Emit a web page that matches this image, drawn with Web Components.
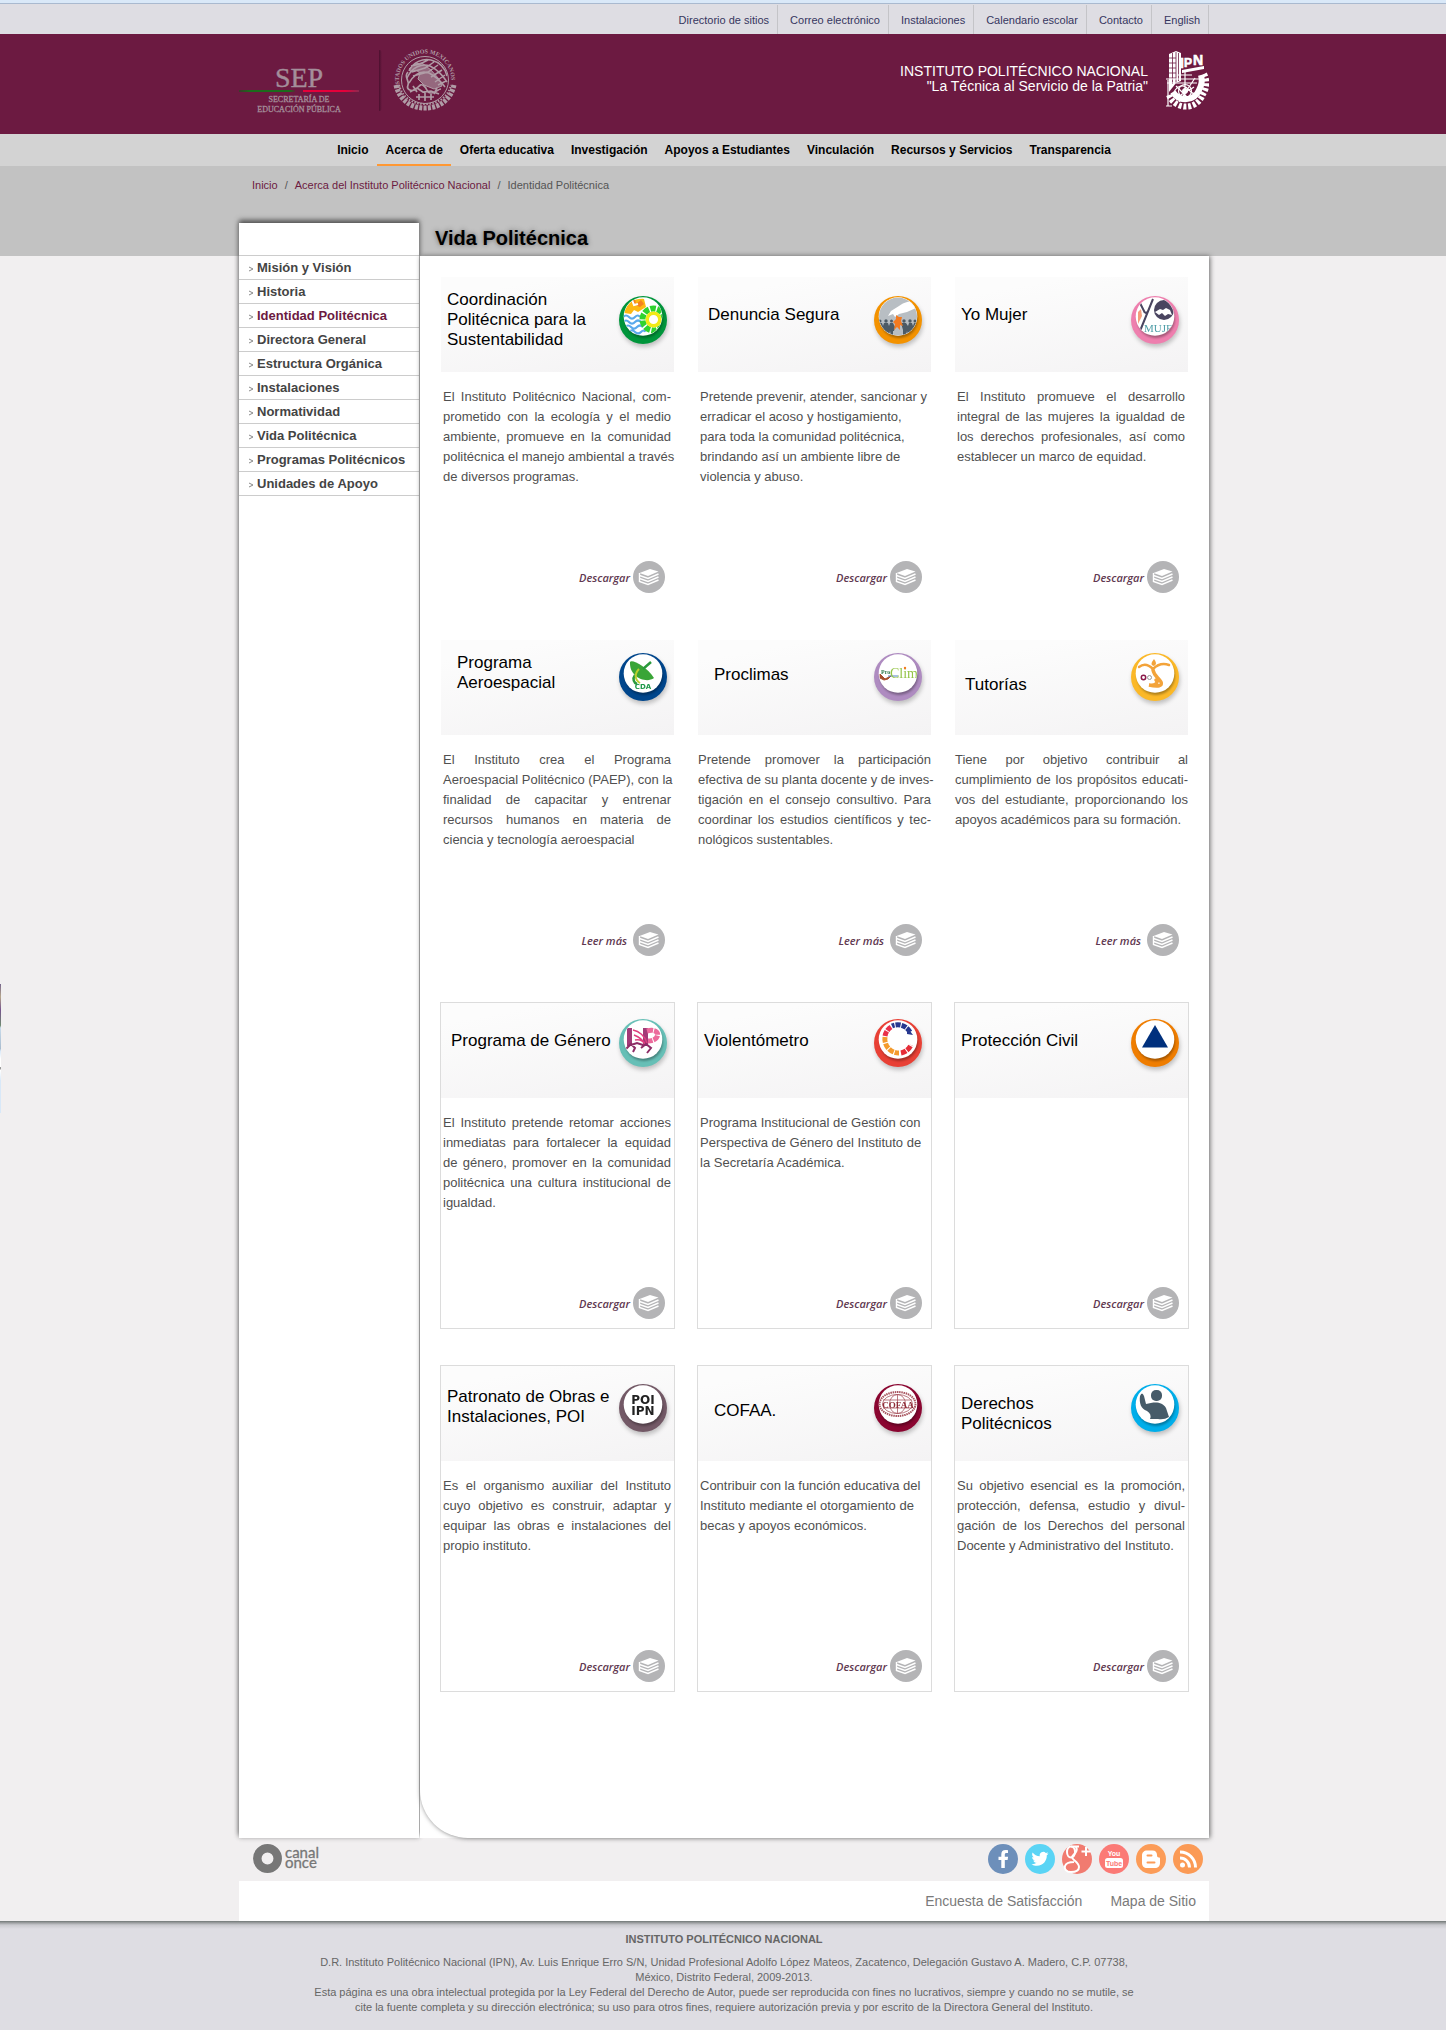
<!DOCTYPE html>
<html lang="es">
<head>
<meta charset="utf-8">
<title>Vida Politécnica - Instituto Politécnico Nacional</title>
<style>
  body { margin: 0; background: #f1eff0; font-family: "Liberation Sans", Arial, sans-serif; color: #444; }
</style>
</head>
<body>
<ipn-page>
  <top-bar slot="top">
    <a href="#">Directorio de sitios</a><a href="#">Correo electrónico</a><a href="#">Instalaciones</a><a href="#">Calendario escolar</a><a href="#">Contacto</a><a href="#">English</a>
  </top-bar>
  <site-header slot="top"></site-header>
  <main-nav slot="top">
    <a href="#">Inicio</a><a href="#" aria-current="page">Acerca de</a><a href="#">Oferta educativa</a><a href="#">Investigación</a><a href="#">Apoyos a Estudiantes</a><a href="#">Vinculación</a><a href="#">Recursos y Servicios</a><a href="#">Transparencia</a>
  </main-nav>
  <bread-crumb slot="crumbs"><a href="#">Inicio</a><span>/</span><a href="#">Acerca del Instituto Politécnico Nacional</a><span>/</span><span>Identidad Politécnica</span></bread-crumb>
  <side-menu slot="side">
    <a href="#">Misión y Visión</a>
    <a href="#">Historia</a>
    <a href="#" aria-current="page">Identidad Politécnica</a>
    <a href="#">Directora General</a>
    <a href="#">Estructura Orgánica</a>
    <a href="#">Instalaciones</a>
    <a href="#">Normatividad</a>
    <a href="#">Vida Politécnica</a>
    <a href="#">Programas Politécnicos</a>
    <a href="#">Unidades de Apoyo</a>
  </side-menu>
  <span slot="title">Vida Politécnica</span>

  <program-card class="r1 near" top="high" badge="sustentabilidad" color="#00953b" action="Descargar">
    <span slot="title">Coordinación<br>Politécnica para la<br>Sustentabilidad</span>
    <text-lines justify><span>El Instituto Politécnico Nacional, com-</span><span>prometido con la ecología y el medio</span><span>ambiente, promueve en la comunidad</span><span>politécnica el manejo ambiental a través</span><span>de diversos programas.</span></text-lines>
  </program-card>
  <program-card class="r1" indent="mid" badge="denuncia" color="#f39200" action="Descargar">
    <span slot="title">Denuncia Segura</span>
    <text-lines><span>Pretende prevenir, atender, sancionar y</span><span>erradicar el acoso y hostigamiento,</span><span>para toda la comunidad politécnica,</span><span>brindando así un ambiente libre de</span><span>violencia y abuso.</span></text-lines>
  </program-card>
  <program-card class="r1" badge="mujer" color="#ee7fae" action="Descargar">
    <span slot="title">Yo Mujer</span>
    <text-lines justify><span>El Instituto promueve el desarrollo</span><span>integral de las mujeres la igualdad de</span><span>los derechos profesionales, así como</span><span>establecer un marco de equidad.</span></text-lines>
  </program-card>

  <program-card class="r2 near" top="high" indent="far" badge="cda" color="#00468c" action="Leer más">
    <span slot="title">Programa<br>Aeroespacial</span>
    <text-lines justify><span>El Instituto crea el Programa</span><span>Aeroespacial Politécnico (PAEP), con la</span><span>finalidad de capacitar y entrenar</span><span>recursos humanos en materia de</span><span>ciencia y tecnología aeroespacial</span></text-lines>
  </program-card>
  <program-card class="r2" wide top="upper" indent="far" badge="clima" color="#ae8bc0" action="Leer más">
    <span slot="title">Proclimas</span>
    <text-lines justify><span>Pretende promover la participación</span><span>efectiva de su planta docente y de inves-</span><span>tigación en el consejo consultivo. Para</span><span>coordinar los estudios científicos y tec-</span><span>nológicos sustentables.</span></text-lines>
  </program-card>
  <program-card class="r2" wide top="low" indent="mid" badge="tutorias" color="#fbb827" action="Leer más">
    <span slot="title">Tutorías</span>
    <text-lines justify><span>Tiene por objetivo contribuir al</span><span>cumplimiento de los propósitos educati-</span><span>vos del estudiante, proporcionando los</span><span>apoyos académicos para su formación.</span></text-lines>
  </program-card>

  <program-card class="r3 near" framed indent="mid" badge="genero" color="#66bfb6" action="Descargar">
    <span slot="title">Programa de Género</span>
    <text-lines justify><span>El Instituto pretende retomar acciones</span><span>inmediatas para fortalecer la equidad</span><span>de género, promover en la comunidad</span><span>politécnica una cultura institucional de</span><span>igualdad.</span></text-lines>
  </program-card>
  <program-card class="r3" framed badge="violento" color="#e84035" action="Descargar">
    <span slot="title">Violentómetro</span>
    <text-lines><span>Programa Institucional de Gestión con</span><span>Perspectiva de Género del Instituto de</span><span>la Secretaría Académica.</span></text-lines>
  </program-card>
  <program-card class="r3" framed badge="civil" color="#ef7d00" action="Descargar">
    <span slot="title">Protección Civil</span>
  </program-card>

  <program-card class="r4 near" framed top="double" badge="poi" color="#735966" action="Descargar">
    <span slot="title">Patronato de Obras e<br>Instalaciones, POI</span>
    <text-lines justify><span>Es el organismo auxiliar del Instituto</span><span>cuyo objetivo es construir, adaptar y</span><span>equipar las obras e instalaciones del</span><span>propio instituto.</span></text-lines>
  </program-card>
  <program-card class="r4" framed top="low" indent="far" badge="cofaa" color="#8a0530" action="Descargar">
    <span slot="title">COFAA.</span>
    <text-lines><span>Contribuir con la función educativa del</span><span>Instituto mediante el otorgamiento de</span><span>becas y apoyos económicos.</span></text-lines>
  </program-card>
  <program-card class="r4" framed badge="derechos" color="#00aeea" action="Descargar">
    <span slot="title">Derechos<br>Politécnicos</span>
    <text-lines justify><span>Su objetivo esencial es la promoción,</span><span>protección, defensa, estudio y divul-</span><span>gación de los Derechos del personal</span><span>Docente y Administrativo del Instituto.</span></text-lines>
  </program-card>

  <social-strip slot="bottom"></social-strip>
  <quick-links slot="bottom"><a href="#">Encuesta de Satisfacción</a><a href="#">Mapa de Sitio</a></quick-links>
  <site-footer slot="bottom">
    <span slot="name">INSTITUTO POLITÉCNICO NACIONAL</span>
    D.R. Instituto Politécnico Nacional (IPN), Av. Luis Enrique Erro S/N, Unidad Profesional Adolfo López Mateos, Zacatenco, Delegación Gustavo A. Madero, C.P. 07738,<br>México, Distrito Federal, 2009-2013.<br>Esta página es una obra intelectual protegida por la Ley Federal del Derecho de Autor, puede ser reproducida con fines no lucrativos, siempre y cuando no se mutile, se<br>cite la fuente completa y su dirección electrónica; su uso para otros fines, requiere autorización previa y por escrito de la Directora General del Instituto.
  </site-footer>
</ipn-page>

<script>
// Registers a custom element whose shadow root is built by render(element).
function element(name, render) {
  customElements.define(name, class extends HTMLElement {
    connectedCallback() {
      if (!this.shadowRoot) this.attachShadow({ mode: 'open' }).innerHTML = render(this);
    }
  });
}
const COLUMN = '.col{box-sizing:border-box;width:100%;max-width:970px;margin:0 auto}';

element('ipn-page', () => `
<style>
  :host{display:block;position:relative}
  ${COLUMN}
  .band{padding-left:2px;background:linear-gradient(#c2c2c2 90px,transparent 90px)}
  .crumbs{height:57px;box-sizing:border-box;padding:11px 0 0 13px}
  .split{display:flex;background:linear-gradient(transparent 33px,#fff 33px)}
  .side{width:180px;margin-right:1px;flex:none;background:#fff;box-shadow:0 -3px 5px #555,0 0 5px rgba(0,0,0,.2)}
  .right{flex:1;min-width:0;display:flex;flex-direction:column}
  h1{margin:0;height:33px;line-height:30px;padding-left:15px;font-size:20px;color:#000;text-shadow:0 0 5px #666}
  .under{flex:1;background:linear-gradient(#fff,#fff)}
  .panel{background:#fff;padding:20px 20px 146px 20px;border-bottom-left-radius:48px;box-shadow:1px 0 5px #666}
  .cards{display:grid;grid-template-columns:repeat(3,minmax(0,1fr));gap:36px 22px}
  .edge{position:absolute;left:0;top:984px;width:1px;height:129px;
    background:linear-gradient(#77668c,#b6a78c 10%,#76548e 20%,#6f8a70 32%,#c9dcec 34%,#a9bccf 50%,#d8e8f8 52%,#fff 58%,#fff 64%,#777 65%,#fff 67%,#d8e8f8 75%,#d8e8f8)}
</style>
<slot name="top"></slot>
<div class="band"><div class="col">
  <div class="crumbs"><slot name="crumbs"></slot></div>
  <div class="split">
    <div class="side"><slot name="side"></slot></div>
    <div class="right">
      <h1><slot name="title"></slot></h1>
      <div class="under"><main class="panel"><div class="cards"><slot></slot></div></main></div>
    </div>
  </div>
</div></div>
<slot name="bottom"></slot>
<div class="edge"></div>`);

element('top-bar', () => `
<style>
  ${COLUMN}
  :host{display:block;height:31px;padding-left:2px;border-top:3px solid #d9e8f8;background:#dedde3;box-shadow:inset 0 1px #a9b9cf}
  .col{display:flex;justify-content:flex-end;padding-top:2px;height:31px}
  ::slotted(a){display:block;box-sizing:border-box;height:29px;line-height:30px;padding:0 8px 0 12px;border-right:1px solid #c4c4c8;font-size:11px;color:#36365f;text-decoration:none}
</style><nav class="col"><slot></slot></nav>`);

const SEP = `<svg width="122" height="64" viewBox="0 0 122 64" fill="#a48e9a" font-family="'Liberation Serif',serif" text-anchor="middle">
  <text x="60" y="35" font-size="28" stroke="#a48e9a" stroke-width=".4">SEP</text>
  <defs><linearGradient id="g"><stop stop-color="#3c3a2a"/><stop offset=".2" stop-color="#1c6b1c"/><stop offset=".9" stop-color="#1c6b1c"/><stop offset="1" stop-color="#5b2a35"/></linearGradient>
  <linearGradient id="r"><stop stop-color="#e5003a"/><stop offset=".75" stop-color="#e5003a"/><stop offset="1" stop-color="#8a2a50"/></linearGradient></defs>
  <rect y="38" width="56" height="2" fill="url(#g)"/><rect x="64" y="38" width="56" height="2" fill="url(#r)"/>
  <g font-size="8" stroke="#a48e9a" stroke-width=".3"><text x="60" y="50">SECRETARÍA DE</text><text x="60" y="60">EDUCACIÓN PÚBLICA</text></g></svg>`;
const SEAL = `<svg width="66" height="66" viewBox="0 0 66 66" fill="none" stroke="#b09ca6">
  <path id="arc" d="M8.500 41A26 26 0 1 1 57.500 41" stroke="none"/>
  <text font-family="'Liberation Serif',serif" font-weight="bold" font-size="6" fill="#b09ca6" stroke="none"><textPath href="#arc">ESTADOS UNIDOS MEXICANOS</textPath></text>
  <circle cx="33" cy="33" r="23.500" stroke-width="1"/>
  <path d="M4 38C7 52 18 61 33 61S59 52 62 38" stroke-width="5" stroke-dasharray="3 1.300"/>
  <path d="M7 38C10 50 20 57 33 57S56 50 59 38" stroke-width="2" stroke-dasharray="1.500 1.500"/>
  <path d="M17 24c4-9 14-13 22-11 8 2 14 8 16 16M15 31c5-11 15-15 23-12 6 3 12 8 17 16M17 36c6-10 12-13 20-10 6 3 11 7 16 14M36 13l-8 4-9 2M42 15l-9 6-13 4M46 18l-10 7-15 4M50 23l-11 7M53 28l-10 7M54 34l-8 4" stroke-width="1.500"/>
  <path d="M22 17l-5 5 2 3 5-2 4 3-2 6 6 6 10 4 8-3-3-7-8-9-9-7z" fill="#b09ca6" fill-opacity=".6"/>
  <path d="M16 25c-5 5 2 8 0 13s4 7 8 4 4-6 8-3 2 7 7 7 7-4 10-4M18 45l7-4 6 4 8-1 8 3M24 50h18M27 47v6M33 45v9M39 47v6M21 39l4 6M45 41l-3 6" stroke-width="1.700"/></svg>`;
const IPN = `<svg width="44" height="64" viewBox="0 0 44 64" fill="#fff" stroke="#fff">
  <path d="M4 45a18 18 0 0 0 34-1 19 19 0 0 0 1-20" fill="none" stroke-width="6" stroke-dasharray="3 1.800"/>
  <path d="M8 42a14.500 14.500 0 0 0 26-2 19 19 0 0 0 2-15" fill="none" stroke-width="6"/>
  <path d="M4 42V4l7-3v32" stroke="none"/><path d="M11 1l5 2v28l-5 2z" stroke="none"/>
  <path d="M4 8h7M4 13h7M4 18h7M4 23h7M4 28h7M7.500 3v31M11 2v32M13.500 3v28" stroke="#6c1a41" stroke-width=".8"/>
  <path d="M17 20l22-4v3l-22 4z" stroke="none"/>
  <g font-family="'Liberation Sans',sans-serif" font-weight="bold" stroke-width=".6"><text x="15" y="18" font-size="14">I</text><text x="19" y="17" font-size="12">P</text><text x="28" y="15" font-size="14">N</text></g>
  <path d="M1 29h34M2 33h30M20 21v30M13 25h14M9 42c3-6 9-8 13-4s6 7 10 5M12 50c5-9 12-9 17-13M11 36l13 13M30 28L14 52M3 30v26M1 56h6" fill="none" stroke-width="1.200"/>
  <circle cx="20" cy="41" r="6.500" fill="none" stroke-width="1.200"/><circle cx="20" cy="41" r="2.500"/></svg>`;
element('site-header', () => `
<style>
  ${COLUMN}
  :host{display:block;padding-left:2px;background:#6c1a41;color:#fff}
  .col{display:flex;align-items:flex-start;height:100px;padding-top:13px}
  .sep{padding-top:5px}
  .rule{width:3px;height:61px;margin:3px 10px 0 18px;background:linear-gradient(90deg,#4b0f2e,#6c1a41);border-radius:0 3px 3px 0}
  .motto{margin:17px 17px 0 auto;text-align:right;font-size:14px;line-height:15px}
  .ipn{padding-top:3px}
  svg{display:block}
</style>
<header class="col"><div class="sep">${SEP}</div><div class="rule"></div>${SEAL}
<div class="motto">INSTITUTO POLITÉCNICO NACIONAL<br>"La Técnica al Servicio de la Patria"</div><div class="ipn">${IPN}</div></header>`);

element('main-nav', () => `
<style>
  :host{display:block;padding-left:2px;background:#d3d3d3}
  nav{display:flex;justify-content:center;gap:1px;height:32px}
  ::slotted(a){box-sizing:border-box;height:32px;line-height:32px;padding:0 8px;font-size:12px;font-weight:bold;color:#000;text-decoration:none;border-bottom:2px solid transparent}
  ::slotted(a[aria-current]){border-color:#ff9833}
</style><nav><slot></slot></nav>`);

element('bread-crumb', () => `
<style>
  :host{display:flex;gap:7px;font-size:11px;line-height:16px;color:#555}
  ::slotted(a){color:#6c1a41;text-decoration:none}
</style><slot></slot>`);

element('side-menu', () => `
<style>
  :host{display:block;padding-top:32px}
  nav{display:flex;flex-direction:column;border-top:1px solid #ccc}
  ::slotted(a){display:block;height:23px;line-height:24px;padding-left:18px;border-bottom:1px solid #ccc;font-size:13px;font-weight:bold;color:#444;text-decoration:none;
    background:no-repeat 10px 10px/5px 6px url("data:image/svg+xml,%3Csvg xmlns='http://www.w3.org/2000/svg' viewBox='0 0 5 6'%3E%3Cpath d='M0 1l4 2-4 2' fill='none' stroke='%23888'/%3E%3C/svg%3E")}
  ::slotted(a[aria-current]){color:#6c1a41}
</style><nav><slot></slot></nav>`);

// Drawings inside the round badges, on a 48-unit canvas with the white disc near the top.
const ART = {
  sustentabilidad: `<path d="M5 17C8 6 17 2 25 3l2 8-8 5-4-2-3 4z" fill="#fdb913"/><path d="M12 6l4-3 1 5 5-4 3 4-4 3-5-2z" fill="#f58220"/><path d="M13 4l2 5 4-1" stroke="#fff" stroke-width="2" fill="none"/>
    <g stroke="#5aa9ec" stroke-width="2.200" fill="none"><path d="M4 21q3-3 6 0t6 0 5 0M4 26q3-3 6 0t6 0 6 0M6 31q3-3 6 0t6 0 6 0M10 36q3-3 6 0t6 0 4 0"/></g>
    <circle cx="34.500" cy="23.500" r="11" fill="none" stroke="#2fd32f" stroke-width="6" stroke-dasharray="5.500 1.400"/><circle cx="34.500" cy="23.500" r="6.300" fill="#fff" stroke="#f2ea16" stroke-width="3.500"/>`,
  denuncia: `<circle cx="24" cy="21" r="19.500" fill="#b8bec3"/><path d="M42 5c-6 0-12 1-17 5l-8 5-3 5 5-2 2 3 4-3 8-2 9-4z" fill="#fff"/>
    <g fill="#4d5b66"><circle cx="6" cy="25" r="1.500"/><circle cx="12" cy="25" r="1.700"/><circle cx="17.500" cy="25" r="1.500"/><circle cx="30" cy="25" r="1.700"/><circle cx="36" cy="25" r="1.700"/><circle cx="41" cy="25" r="1.500"/>
    <path d="M4 27h4l1 3 1-3h4l1 3 1-3h3l2 4-1 4h-1v5h-2l-1-5-1 5h-3l-1-5-1 5h-2l-1-7-3-1zM27 27h5l2 3 1-3h3l1 3 1-3h3v8h-2l-1 3-2 1-1-4-1 5h-2l-1-5-1 5h-3v-6z"/></g>
    <path d="M22 19l3 2 3 0-1 4 2 5-3-1 0 5-3-3-3 3 1-6-2-2 3-3z" fill="#f37a1f"/>`,
  mujer: `<path d="M8 5l6 12M22 3L9 35M14 17l3-1" stroke="#4a4560" stroke-width="2" fill="none"/><circle cx="33" cy="14" r="10" fill="#4a4560"/><path d="M24 16l5-3 3 1 3-2 4 2 2 5-4-1-3 2-3-3-3 2z" fill="#fff"/>
    <path d="M7 16l3-3 1 7-4 8z" fill="#f59d7c"/><text x="13" y="36" font-family="'Liberation Serif',serif" font-size="11" fill="#4f9ea8">MUJE</text>`,
  cda: `<path d="M11 9c2-3 17 5 24 16-8 6-25-1-24-16z" fill="#3aa537"/><path d="M24 16l8-7M16 22c-3 4-1 8 2 9" stroke="#2b9a3c" stroke-width="2.500" fill="none"/><path d="M20 16c-5 5-4 11 1 14" stroke="#b8cf2e" stroke-width="2" fill="none"/>
    <text x="24" y="36" text-anchor="middle" font-family="'DejaVu Sans',sans-serif" font-weight="bold" font-size="7" fill="#1f9a4a">CDA</text>`,
  clima: `<path d="M6 21l5 5 6-3-3 3-4 1-4-2z" fill="#a4502d" stroke="#a4502d"/><text x="7" y="21" font-family="'Liberation Serif',serif" font-weight="bold" font-size="6" fill="#2d7b4a">Pro</text><path d="M14 23h10" stroke="#5082c4"/>
    <text x="16" y="25" font-family="'Liberation Serif',serif" font-size="14" fill="#94c447">Clim</text><circle cx="31" cy="15" r="1.200" fill="#f37a1f"/>`,
  tutorias: `<g fill="none" stroke="#f3a33a" stroke-linecap="round"><path d="M8 14c5-4 10-2 14 2 4-4 10-6 16-4" stroke-width="2.500"/><path d="M22 17c1 6 6 8 8 12s-3 5-12 3c6 1 10-2 7-5" stroke-width="3.500"/></g><path d="M23 6q4 5 0 7-5-1 0-7" fill="#f3a33a"/>
    <circle cx="12.500" cy="24.500" r="2.200" fill="none" stroke="#8c1b4b" stroke-width="1.500"/><circle cx="18.500" cy="24.500" r="2" fill="none" stroke="#999"/>`,
  genero: `<path d="M8 9h5v18H8zM24 9h5v18h-5z" fill="#a23a78"/><path d="M28 12c14-4 14 10 1 10" fill="none" stroke="#ec6a9c" stroke-width="5" stroke-dasharray="6 1"/><path d="M14 11c6 1 12 6 14 13M15 16c5 2 9 5 11 9M16 21c4-1 8 1 10 4" stroke="#e0407f" stroke-width="1.500" fill="none"/>
    <path d="M7 30l5-5 4 4-2 4M12 26l6-2 6 2M22 29l5-4 5 4-4 5" stroke="#8d2c66" stroke-width="2" fill="none"/>`,
  violento: `<g fill="none" stroke-width="5"><path d="M36 13a14 14 0 0 0-18-6" stroke="#27388f" stroke-dasharray="5 1"/><path d="M17 8a14 14 0 0 0-6 9" stroke="#e9304a" stroke-dasharray="5 1"/><path d="M11 18a14 14 0 0 0 14 16" stroke="#f49b2d" stroke-dasharray="5.500 1"/><path d="M27 34a14 14 0 0 0 10-8" stroke="#e52d38" stroke-dasharray="5.500 1"/></g><path d="M33 8l6 8-6-1z" fill="#27388f"/>`,
  civil: `<path d="M24 6L37 28.500H11z" fill="#00307d"/>`,
  poi: `<g font-family="'DejaVu Sans',sans-serif" font-weight="bold" fill="#222" text-anchor="middle"><text x="24" y="20" font-size="12">POI</text><text x="24" y="31" font-size="12">IPN</text></g>`,
  cofaa: `<g fill="none" stroke="#a8555f" stroke-width=".8"><ellipse cx="23.500" cy="20" rx="18" ry="12" stroke-width="2" stroke-dasharray="1.500 .7"/><ellipse cx="23.500" cy="20" rx="15" ry="9.500"/><ellipse cx="23.500" cy="20" rx="8" ry="9.500"/><path d="M9 16h29M9 24h29M23.500 10v20"/></g>
    <text x="24" y="24" text-anchor="middle" font-family="'Liberation Serif',serif" font-weight="bold" font-size="9" fill="#8e2a36">COFAA</text>`,
  derechos: `<g fill="#465b69"><rect x="20" y="6" width="11" height="11" rx="5"/><path d="M9 12q2-5 4 0l2 8c8-2 16-3 20 4l3 9q-5 3-11 2h-8q2-5-3-8c-6-2-8-8-7-15z"/></g>`
};
element('badge-art', el => `
<style>:host{display:block;width:48px;height:48px;filter:drop-shadow(1px 3px 2px rgba(0,0,0,.22))}svg{display:block}</style>
<svg width="48" height="48" viewBox="0 0 48 48"><defs><clipPath id="c"><circle cx="24" cy="20.500" r="19"/></clipPath><filter id="b"><feGaussianBlur stdDeviation="1.200"/></filter></defs>
<circle cx="24" cy="24" r="24" fill="${el.getAttribute('color')}"/><circle cx="25" cy="23" r="19" fill="#000" opacity=".3" filter="url(#b)"/><circle cx="24" cy="20.500" r="19.300" fill="#fff"/><g clip-path="url(#c)">${ART[el.getAttribute('name')]}</g></svg>`);

element('text-lines', () => `
<style>
  :host{display:block;font-size:13px;line-height:20px;color:#505050}
  ::slotted(span){display:block;white-space:nowrap}
  :host([justify]) ::slotted(span:not(:last-child)){text-align-last:justify}
</style><slot></slot>`);

element('program-card', el => `
<style>
  :host{display:flex;flex-direction:column;box-sizing:border-box;min-height:327px;border:1px solid transparent;--t:28px;--i:6px;--b:19px;--e:9px}
  :host([framed]){border-color:#dcdcdc}
  :host([top=high]){--t:13px} :host([top=double]){--t:21px} :host([top=upper]){--t:25px} :host([top=low]){--t:35px}
  :host([indent=mid]){--i:10px} :host([indent=far]){--i:16px}
  :host(.r2){--b:13px} :host(.r3){--b:16px} :host(.r4){--b:18px} :host(.near){--e:7px}
  .head{display:flex;justify-content:space-between;box-sizing:border-box;height:95px;padding:0 var(--e) 0 var(--i);background:linear-gradient(170deg,#fcfcfc 15%,#f4f3f4)}
  h2{margin:0;padding-top:var(--t);font-size:17px;line-height:20px;font-weight:normal;color:#000;white-space:nowrap}
  badge-art{margin-top:var(--b);flex:none}
  .body{padding:15px 3px 0 2px}
  :host([wide]) .body{padding:15px 0 0}
  .act{display:flex;align-items:center;gap:3px;margin:auto 9px 9px auto;font:italic 600 11px "Open Sans","Noto Sans",sans-serif;color:#5f3850;text-decoration:none}
  .act.more{gap:6px}
  svg{display:block}
</style>
<div class="head"><h2><slot name="title"></slot></h2><badge-art name="${el.getAttribute('badge')}" color="${el.getAttribute('color')}"></badge-art></div>
<div class="body"><slot></slot></div>
<a class="act ${el.getAttribute('action') === 'Descargar' ? '' : 'more'}" href="#">${el.getAttribute('action')}
<svg width="32" height="32" viewBox="0 0 32 32"><circle cx="16" cy="16" r="16" fill="#b4b4b6"/><path d="M6.500 12L17 8l8.500 2.500L15 15z" fill="#fff"/><path d="M6.500 12v2.500l8.500 3 10.500-4.500M6.500 15v2.500l8.500 3 10.500-4.500M6.500 18v2.500l8.500 3 10.500-4.500" fill="none" stroke="#fff" stroke-width="1.400"/></svg></a>`);

const disc = (label, color, art) => `<a href="#" aria-label="${label}"><svg width="30" height="30" viewBox="0 0 30 30"><circle cx="15" cy="15" r="15" fill="${color}"/>${art}</svg></a>`;
element('social-strip', () => `
<style>
  ${COLUMN}
  :host{display:block;padding-left:2px}
  .col{display:flex;align-items:flex-start;gap:7px;height:43px;padding:6px 6px 0 14px}
  .once{margin-right:auto} a,svg{display:block}
</style>
<div class="col"><a class="once" href="#" aria-label="Canal Once"><svg width="70" height="30" viewBox="0 0 70 30"><circle cx="14.500" cy="14.500" r="10.200" fill="none" stroke="#777" stroke-width="8.500"/><g font-family="Lato,sans-serif" font-size="15" fill="#777" stroke="#777" stroke-width=".3"><text x="32" y="14">canal</text><text x="32" y="24">once</text></g></svg></a>
${disc('Facebook', '#6d8fba', '<path d="M16.800 24v-8h2.800l.5-3.300h-3.300v-2c0-1.200.5-1.700 1.700-1.700H20V6.200C19.300 6 18.500 6 17.500 6c-2.700 0-4.200 1.500-4.200 4.300v2.400H10.500V16h2.800v8z" fill="#fff"/>')}
${disc('Twitter', '#5ad4f5', '<path d="M23.500 9.500c-.6.300-1.300.5-2 .6.700-.4 1.300-1.100 1.500-1.900-.7.400-1.400.7-2.200.9a3.500 3.500 0 0 0-6 3.200c-2.900-.1-5.500-1.500-7.200-3.700-.9 1.600-.5 3.600 1.100 4.700-.6 0-1.100-.2-1.600-.4 0 1.700 1.200 3.100 2.800 3.400-.5.200-1 .2-1.600.1.500 1.400 1.700 2.400 3.300 2.400A7 7 0 0 1 6.500 20.200c1.600 1 3.400 1.600 5.400 1.600 6.500 0 10.100-5.400 9.900-10.500.7-.5 1.300-1.100 1.700-1.800z" fill="#fff"/>')}
${disc('Google+', '#f17b70', '<g fill="none" stroke="#fff" stroke-width="2"><ellipse cx="9" cy="8" rx="4" ry="5.500"/><path d="M17 2.500H9M14 3c3 5-3 7-4 10 0 3 7 5 7 10 0 4-4 5-8 5-5 0-7-3-6-6s4-4 9-4M24 3v9M19.500 7.500h9"/></g>')}
${disc('YouTube', '#fb7a76', '<rect x="6" y="14" width="18" height="10" rx="2.500" fill="#fff"/><g text-anchor="middle" font-family="\'Liberation Sans\',sans-serif" font-weight="bold" font-size="7"><text x="15" y="12" fill="#fff">You</text><text x="15" y="21.500" fill="#fb7a76">Tube</text></g>')}
${disc('Blogger', '#fc9c58', '<path d="M11 6.500h5.500c3 0 4.500 2 4.500 4.500 0 1.500.3 2.500 2 2.500.7 0 1 .5 1 1.200V19c0 3-2 5-5 5h-8c-3 0-5-2-5-5v-7.500c0-3 2-5 5-5z" fill="#fff"/><path d="M11.500 11.500h4M11.500 18.500h7" stroke="#fc9c58" stroke-width="2" stroke-linecap="round"/>')}
${disc('RSS', '#fb9a55', '<circle cx="9.500" cy="21" r="2.500" fill="#fff"/><path d="M7 14a9.500 9.500 0 0 1 9.500 9.500M7 8a15.500 15.500 0 0 1 15.500 15.500" fill="none" stroke="#fff" stroke-width="3"/>')}
</div>`);

element('quick-links', () => `
<style>
  ${COLUMN}
  :host{display:block;padding-left:2px}
  .col{display:flex;justify-content:flex-end;gap:28px;height:40px;padding-right:13px;background:#fff;line-height:40px}
  ::slotted(a){font-size:14px;color:#7a7a7a;text-decoration:none}
</style><nav class="col"><slot></slot></nav>`);

element('site-footer', () => `
<style>
  :host{display:block;border-top:1px solid #7c8281;background:linear-gradient(#8a8e8f,#c9c9ce 3px,#dedde3 7px);text-align:center;color:#666}
  footer{padding:10px 0 15px 2px;font-size:11px;line-height:15px}
  strong{display:block;font-size:11px;line-height:14px;margin-bottom:9px}
</style><footer><strong><slot name="name"></slot></strong><slot></slot></footer>`);
</script>
</body>
</html>
